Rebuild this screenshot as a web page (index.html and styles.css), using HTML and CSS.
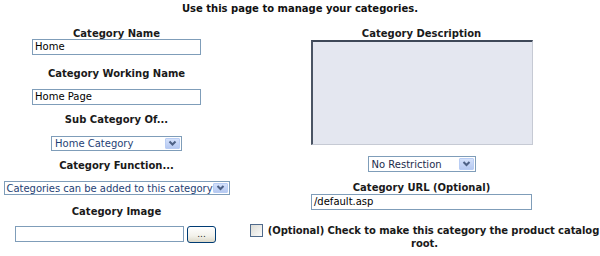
FILE: index.html
```html
<!DOCTYPE html>
<html>
<head>
<meta charset="utf-8">
<title>Manage Categories</title>
<link rel="stylesheet" href="styles.css">
</head>
<body>
<div class="page">
  <div class="title">Use this page to manage your categories.</div>
  <div class="columns">
    <div class="col col-left">
      <div class="label lbl-name">Category Name</div>
      <div class="field f-name"><div class="input w169">Home</div></div>
      <div class="label lbl-working">Category Working Name</div>
      <div class="field f-working"><div class="input w169">Home Page</div></div>
      <div class="label lbl-sub">Sub Category Of...</div>
      <div class="field f-sub">
        <div class="select sel-home"><span class="sel-text">Home Category</span><span class="sel-btn"><svg width="13" height="11" viewBox="0 0 13 11"><path d="M3.5 3.5 L6.5 6.5 L9.5 3.5" fill="none" stroke="#4d6185" stroke-width="2"/></svg></span></div>
      </div>
      <div class="label lbl-func">Category Function...</div>
      <div class="field f-func">
        <div class="select sel-func"><span class="sel-text tight">Categories can be added to this category</span><span class="sel-btn"><svg width="13" height="10" viewBox="0 0 13 10"><path d="M3.5 3 L6.5 6 L9.5 3" fill="none" stroke="#4d6185" stroke-width="2"/></svg></span></div>
      </div>
      <div class="label lbl-image">Category Image</div>
      <div class="field f-image">
        <div class="input w169"></div>
        <div class="button">...</div>
      </div>
    </div>
    <div class="col col-right">
      <div class="label lbl-desc">Category Description</div>
      <div class="field f-desc"><div class="textarea"></div></div>
      <div class="field f-restrict">
        <div class="select sel-restrict"><span class="sel-text dark">No Restriction</span><span class="sel-btn"><svg width="13" height="12" viewBox="0 0 13 12"><path d="M3.5 4 L6.5 7 L9.5 4" fill="none" stroke="#4d6185" stroke-width="2"/></svg></span></div>
      </div>
      <div class="label lbl-url">Category URL (Optional)</div>
      <div class="field f-url"><div class="input w221">/default.asp</div></div>
      <div class="check-row"><span class="checkbox"></span>(Optional) Check to make this category the product catalog root.</div>
    </div>
  </div>
</div>
</body>
</html>
```
FILE: styles.css
```css
html, body {
  margin: 0;
  padding: 0;
  background: #ffffff;
}
body {
  font-family: "DejaVu Sans", Verdana, sans-serif;
  font-size: 10px;
  color: #000000;
}
.page {
  width: 600px;
  padding-top: 4px;
}
.title {
  font-weight: bold;
  text-align: center;
  line-height: 10px;
  color: #111111;
}
.columns {
  display: grid;
  grid-template-columns: 233px 357px;
  column-gap: 10px;
}
.col {
  display: flex;
  flex-direction: column;
  align-items: center;
}
.label {
  font-weight: bold;
  line-height: 10px;
  text-align: center;
  color: #1a1a1a;
  white-space: nowrap;
}
.field {
  display: flex;
  align-items: flex-start;
  justify-content: center;
}
.lbl-name { margin-top: 15px; }
.f-name { margin-top: 0; }
.lbl-working { margin-top: 14px; }
.f-working { margin-top: 10px; }
.lbl-sub { margin-top: 10px; }
.f-sub { margin-top: 11px; }
.lbl-func { margin-top: 10px; }
.f-func { margin-top: 10px; }
.lbl-image { margin-top: 12px; }
.f-image { margin-top: 9px; gap: 3px; margin-right: 2px; }

.lbl-desc { margin-top: 15px; }
.f-desc { margin-top: 1px; }
.f-restrict { margin-top: 11px; }
.lbl-url { margin-top: 11px; }
.f-url { margin-top: 1px; }

.input {
  box-sizing: border-box;
  height: 16px;
  border: 1px solid #7f9db9;
  background: #ffffff;
  padding: 0 2px;
  line-height: 14px;
  color: #000000;
  white-space: nowrap;
  overflow: hidden;
}
.w169 { width: 169px; }
.w221 { width: 221px; }

.select {
  box-sizing: border-box;
  display: flex;
  align-items: stretch;
  border: 1px solid #7f9db9;
  background: #ffffff;
  color: #1f3f75;
}
.sel-text {
  flex: 1;
  min-width: 0;
  padding-left: 3px;
  white-space: nowrap;
  display: flex;
  align-items: center;
}
.sel-text.tight {
  padding-left: 2px;
  letter-spacing: -0.03px;
}
.sel-text.dark { color: #1c2c4c; }
.sel-btn {
  flex-shrink: 0;
  width: 15px;
  margin: 1px;
  box-sizing: border-box;
  border: 1px solid #b9cdf4;
  border-radius: 1px;
  background: linear-gradient(#d4e1fb, #b6c9f1);
  display: flex;
  align-items: center;
  justify-content: center;
}
.sel-home { width: 131px; height: 15px; }
.sel-func { width: 226px; height: 14px; }
.sel-restrict { width: 108px; height: 16px; }

.button {
  box-sizing: border-box;
  width: 29px;
  height: 17px;
  border: 1px solid #003c74;
  border-radius: 3px;
  background: linear-gradient(#ffffff, #f2f1ea 60%, #dcd8c8);
  text-align: center;
  line-height: 15px;
  font-size: 9px;
  color: #222222;
}

.textarea {
  box-sizing: border-box;
  width: 222px;
  height: 105px;
  background: #e4e7f0;
  border-top: 2px solid #3e4858;
  border-left: 2px solid #4a5464;
  border-right: 1px solid #c6cad4;
  border-bottom: 1px solid #c6cad4;
}

.check-row {
  margin-top: 14px;
  padding-left: 3px;
  margin-right: -3px;
  letter-spacing: -0.08px;
  font-weight: bold;
  line-height: 13px;
  text-align: center;
  color: #1a1a1a;
}
.checkbox {
  display: inline-block;
  box-sizing: border-box;
  width: 13px;
  height: 13px;
  border: 1px solid #4f6a8c;
  background: linear-gradient(135deg, #dcdcd6, #fbfbfa);
  vertical-align: -3px;
  margin-right: 5px;
}
```
